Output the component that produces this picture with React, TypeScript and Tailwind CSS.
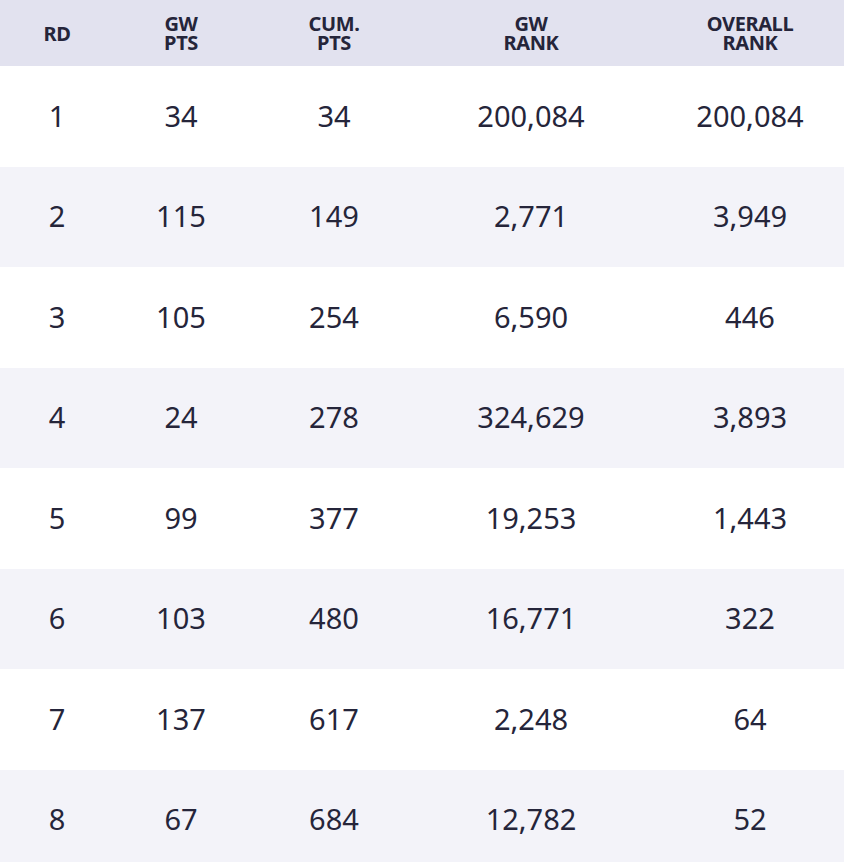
import React from "react";

const rows = [
  ["1", "34", "34", "200,084", "200,084"],
  ["2", "115", "149", "2,771", "3,949"],
  ["3", "105", "254", "6,590", "446"],
  ["4", "24", "278", "324,629", "3,893"],
  ["5", "99", "377", "19,253", "1,443"],
  ["6", "103", "480", "16,771", "322"],
  ["7", "137", "617", "2,248", "64"],
  ["8", "67", "684", "12,782", "52"],
];

const grid = "grid grid-cols-[114px_134px_172px_236px_1fr]";

export default function App() {
  return (
    <div
      className="w-[844px] h-[862px] overflow-hidden bg-white text-[#25253a]"
      style={{ fontFamily: '"Noto Sans", "Open Sans", sans-serif' }}
    >
      <div className={`${grid} h-[66px] bg-[#e2e2ef] items-center text-[20px] font-bold leading-[19px] text-center tracking-[-0.4px]`}>
        <div>RD</div>
        <div>GW<br />PTS</div>
        <div>CUM.<br />PTS</div>
        <div className="pr-[14px]">GW<br />RANK</div>
        <div>OVERALL<br />RANK</div>
      </div>
      {rows.map((r, i) => (
        <div
          key={i}
          className={`${grid} h-[100.5px] items-center text-center text-[29px] pb-[2px] ${i % 2 === 1 ? "bg-[#f3f3f9]" : "bg-white"}`}
        >
          <div>{r[0]}</div>
          <div>{r[1]}</div>
          <div>{r[2]}</div>
          <div className="pr-[14px]">{r[3]}</div>
          <div>{r[4]}</div>
        </div>
      ))}
    </div>
  );
}
